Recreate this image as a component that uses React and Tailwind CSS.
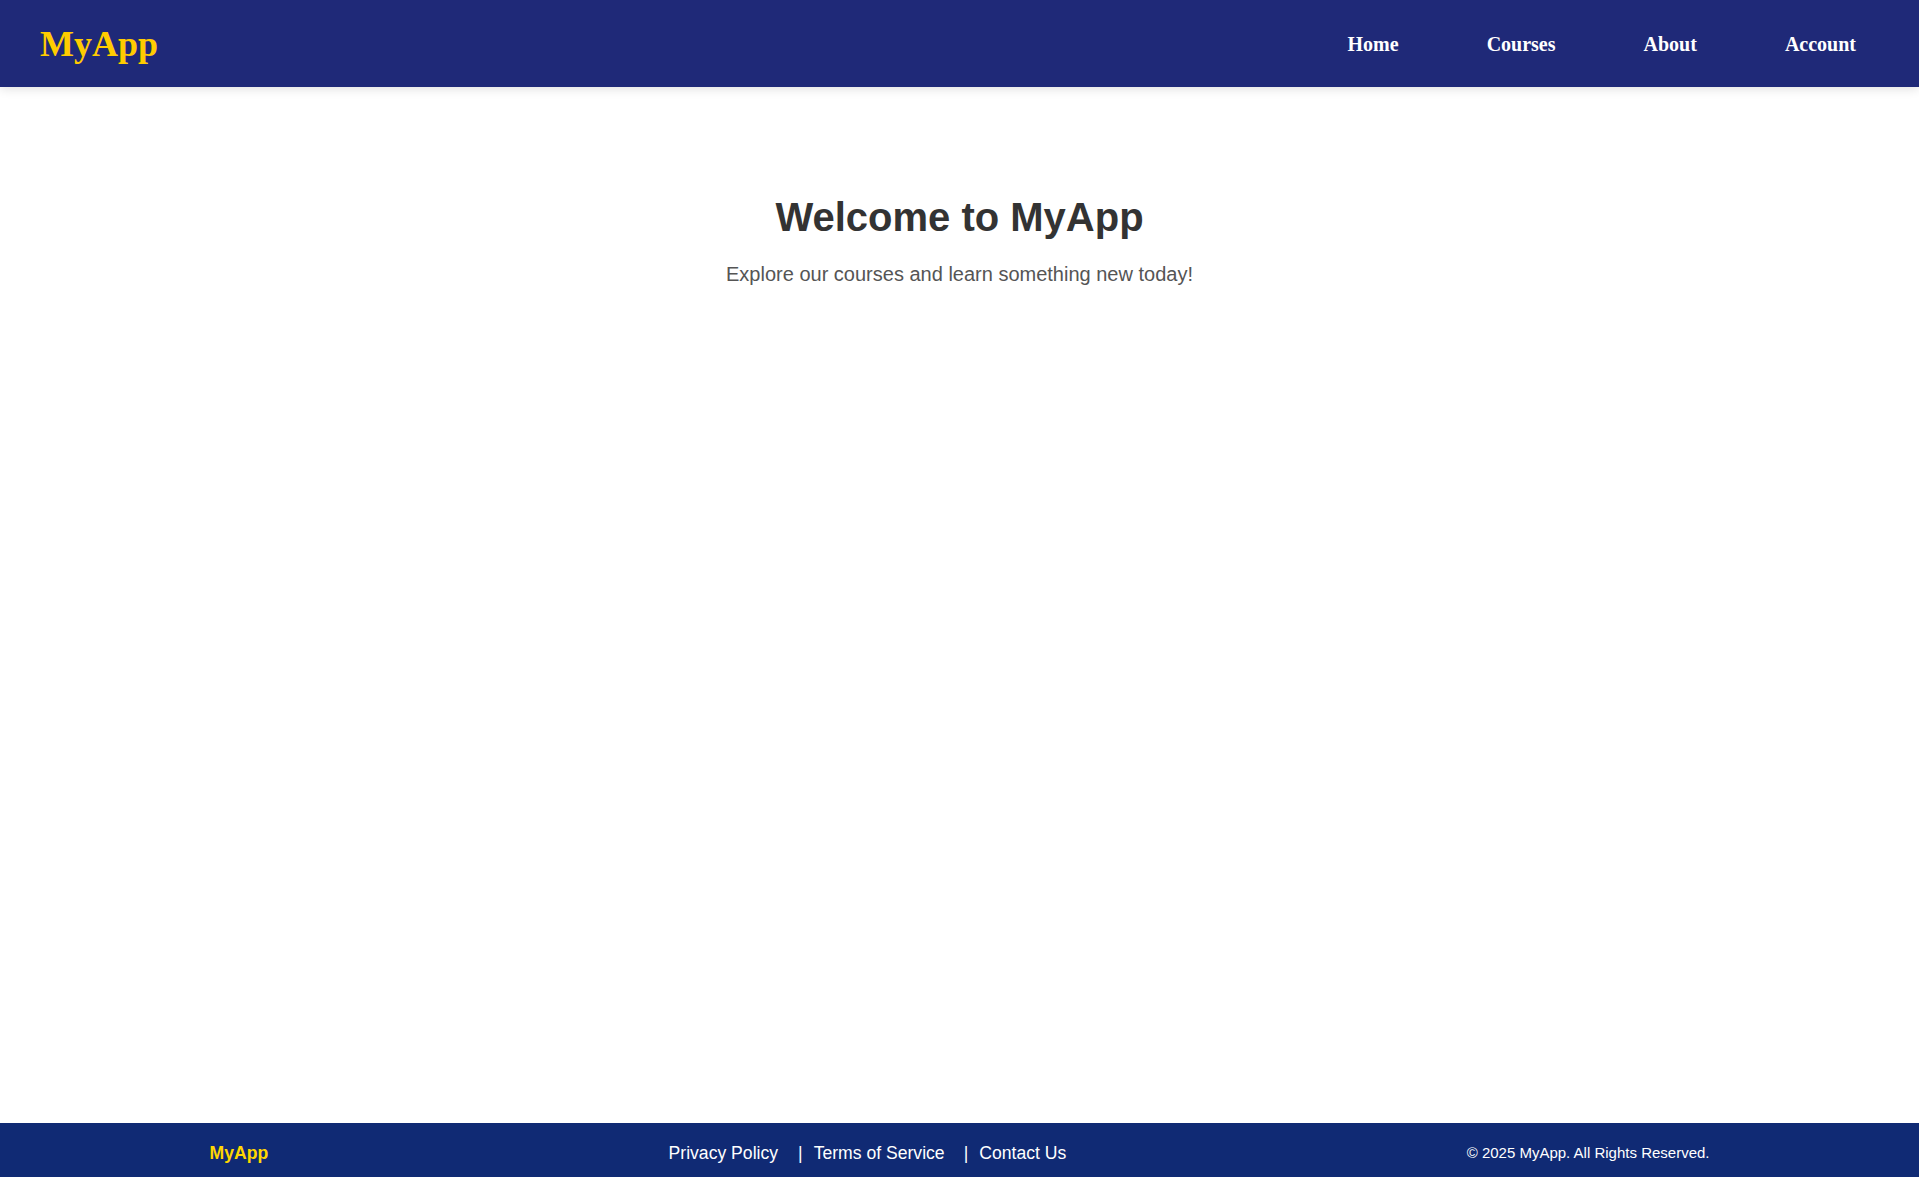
export default function App() {
  return (
    <div className="min-h-screen flex flex-col bg-white" style={{ fontFamily: '"Liberation Sans", Arial, sans-serif' }}>
      <header className="h-[87px] bg-[#1f2978] flex items-center justify-between px-[40px] shadow-[0_2px_10px_rgba(0,0,0,0.12)] relative z-10">
        <div className="text-[36px] font-bold text-[#ffcc00] leading-none" style={{ fontFamily: '"Liberation Serif", "Times New Roman", serif' }}>
          MyApp
        </div>
        <nav className="flex items-center gap-[88px] pr-[23px] text-[20px] font-bold text-white" style={{ fontFamily: '"Liberation Serif", "Times New Roman", serif' }}>
          <a href="#">Home</a>
          <a href="#">Courses</a>
          <a href="#">About</a>
          <a href="#">Account</a>
        </nav>
      </header>
      <main className="flex-1 flex flex-col items-center pt-[107px]">
        <h1 className="text-[40px] leading-[46px] font-bold text-[#333333]">Welcome to MyApp</h1>
        <p className="mt-[23px] text-[20px] leading-[23px] text-[#555555]">Explore our courses and learn something new today!</p>
      </main>
      <footer className="h-[54px] bg-[#102a74] text-white pt-[6px]">
        <div className="max-w-[1500px] mx-auto h-full flex items-center justify-between">
          <div className="text-[17.6px] font-bold text-[#ffd700]">MyApp</div>
          <div className="flex items-center text-[17.6px]">
            <a href="#">Privacy Policy</a>
            <span className="ml-[20px] mr-[11px]">|</span>
            <a href="#">Terms of Service</a>
            <span className="ml-[19px] mr-[11px]">|</span>
            <a href="#">Contact Us</a>
          </div>
          <div className="text-[15px]">© 2025 MyApp. All Rights Reserved.</div>
        </div>
      </footer>
    </div>
  );
}
